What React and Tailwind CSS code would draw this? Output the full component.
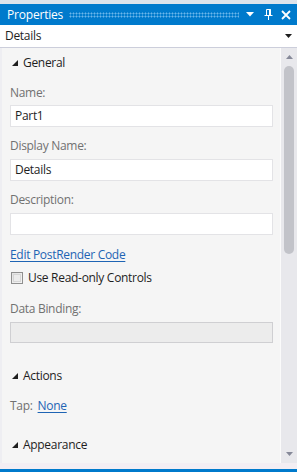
import React from "react";

const font = { fontFamily: '"Open Sans", "Noto Sans", sans-serif' };

function Tri() {
  return (
    <svg width="6" height="6" viewBox="0 0 6 6" className="shrink-0">
      <path d="M6 0 L6 6 L0 6 Z" fill="#1e1e1e" />
    </svg>
  );
}

function Section({ title, className }) {
  return (
    <div className={"flex items-center h-[20px] " + (className || "")}>
      <div className="w-[2px]" />
      <Tri />
      <span className="ml-[5px] text-[12px] text-[#1e1e1e] tracking-[-0.3px]">{title}</span>
    </div>
  );
}

function Label({ children, className }) {
  return (
    <div className={"h-[16px] flex items-center text-[12px] text-[#717171] tracking-[-0.3px] " + (className || "")}>
      {children}
    </div>
  );
}

function Input({ value, className }) {
  return (
    <div
      className={
        "w-[263px] h-[22px] bg-white border border-[#e3e3e6] flex items-center pl-[4px] text-[12px] text-[#1e1e1e] tracking-[-0.3px] " +
        (className || "")
      }
    >
      {value}
    </div>
  );
}

export default function App() {
  return (
    <div className="w-[297px] h-[472px] bg-[#eeeef2] flex flex-col overflow-hidden select-none" style={font}>
      <div className="h-[4px] bg-[#dde3eb]" />
      {/* Title bar */}
      <div className="h-[21px] bg-[#007acc] flex items-center pl-[7px] pr-[6px]">
        <span className="text-white text-[12px] leading-none tracking-[-0.2px]">Properties</span>
        <div className="flex-1 h-[6px] ml-[6px] mr-[7px] bg-[radial-gradient(circle,#6cb6ea_0.9px,transparent_1.1px)] bg-[length:3px_3px]" />
        <svg width="8" height="5" viewBox="0 0 8 5" className="mr-[10px]">
          <path d="M0 0 L8 0 L4 4.5 Z" fill="#ffffff" />
        </svg>
        <svg width="9" height="11" viewBox="0 0 9 11" className="mr-[8px]">
          <path d="M2.5 0.5 H6.5 V6 M2.5 0.5 V6" stroke="#ffffff" strokeWidth="1" fill="none" />
          <rect x="5" y="0.5" width="2" height="5.5" fill="#ffffff" />
          <rect x="0.5" y="6" width="8" height="1" fill="#ffffff" />
          <rect x="4" y="7" width="1" height="4" fill="#ffffff" />
        </svg>
        <svg width="10" height="10" viewBox="0 0 10 10">
          <path d="M1 1 L9 9 M9 1 L1 9" stroke="#ffffff" strokeWidth="1.8" />
        </svg>
      </div>
      {/* Dropdown */}
      <div className="h-[23px] bg-white border-b border-[#cccedb] flex items-center pl-[5px] pr-[5px]">
        <span className="flex-1 text-[12px] text-[#1e1e1e] tracking-[-0.3px]">Details</span>
        <svg width="7" height="4" viewBox="0 0 7 4">
          <path d="M0 0 L7 0 L3.5 4 Z" fill="#1e1e1e" />
        </svg>
      </div>
      {/* Main */}
      <div className="flex-1 flex min-h-0">
        <div className="w-[2px] bg-[#eeeef2]" />
        <div className="w-[279px] bg-[#f5f5f5] pl-[8px] pt-[5px] border-r border-[#fbfbfb]">
          <Section title="General" />
          <Label className="mt-[12px]">Name:</Label>
          <Input value="Part1" className="mt-[4px]" />
          <Label className="mt-[11px]">Display Name:</Label>
          <Input value="Details" className="mt-[5px] bg-[#fcfcfc]" />
          <Label className="mt-[11px]">Description:</Label>
          <Input value="" className="mt-[5px]" />
          <div className="mt-[12px] h-[16px] flex items-center">
            <span className="text-[12px] text-[#1e64b4] underline underline-offset-2 tracking-[-0.3px]">Edit PostRender Code</span>
          </div>
          <div className="mt-[7px] h-[16px] flex items-center">
            <div className="w-[12px] h-[12px] ml-[1px] border border-[#8f8f8f] bg-[linear-gradient(135deg,#e2e2e2,#f5f5f5)] flex items-center justify-center">
              <div className="w-[8px] h-[8px] border border-[#d6d6d6] bg-[#ececec]" />
            </div>
            <span className="ml-[5px] text-[12px] text-[#1e1e1e] tracking-[-0.3px]">Use Read-only Controls</span>
          </div>
          <Label className="mt-[15px]">Data Binding:</Label>
          <div className="mt-[5px] w-[263px] h-[21px] bg-[#ececec] border border-[#cfcfd2]" />
          <Section title="Actions" className="mt-[23px]" />
          <div className="mt-[12px] h-[16px] flex items-center text-[12px] tracking-[-0.3px]">
            <span className="text-[#717171]">Tap:</span>
            <span className="ml-[5px] text-[#1e64b4] underline underline-offset-2">None</span>
          </div>
          <Section title="Appearance" className="mt-[21px]" />
        </div>
        {/* Scrollbar */}
        <div className="flex-1 bg-[#e8e8ec] flex flex-col items-center pt-[7px] pb-[7px]">
          <svg width="7" height="4" viewBox="0 0 7 4">
            <path d="M0 4 L7 4 L3.5 0 Z" fill="#868999" />
          </svg>
          <div className="mt-[7px] w-[10px] h-[188px] rounded-full bg-[#c2c3c9]" />
          <div className="flex-1" />
          <svg width="7" height="4" viewBox="0 0 7 4">
            <path d="M0 0 L7 0 L3.5 4 Z" fill="#868999" />
          </svg>
        </div>
      </div>
      <div className="h-[6px] bg-[#f3eef3]" />
      <div className="h-[3px] bg-[#007acc]" />
    </div>
  );
}
